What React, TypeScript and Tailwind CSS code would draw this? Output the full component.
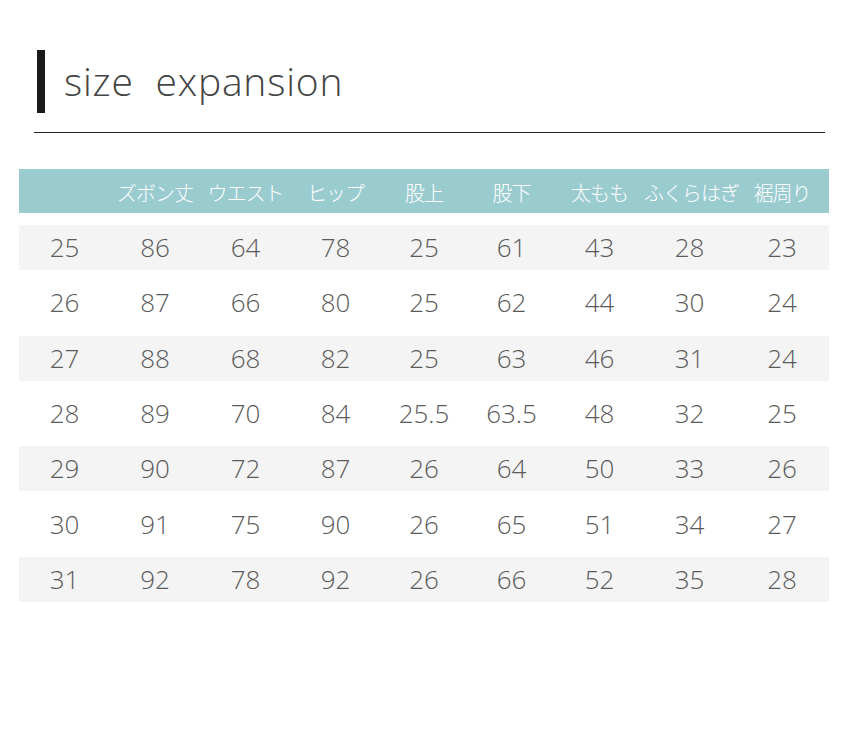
const headers = ["", "ズボン丈", "ウエスト", "ヒップ", "股上", "股下", "太もも", "ふくらはぎ", "裾周り"];

const rows = [
  ["25", "86", "64", "78", "25", "61", "43", "28", "23"],
  ["26", "87", "66", "80", "25", "62", "44", "30", "24"],
  ["27", "88", "68", "82", "25", "63", "46", "31", "24"],
  ["28", "89", "70", "84", "25.5", "63.5", "48", "32", "25"],
  ["29", "90", "72", "87", "26", "64", "50", "33", "26"],
  ["30", "91", "75", "90", "26", "65", "51", "34", "27"],
  ["31", "92", "78", "92", "26", "66", "52", "35", "28"],
];

const cols = "grid grid-cols-[91px_90px_91px_89px_88px_87px_89px_91px_94px]";

export default function App() {
  return (
    <div className="w-[850px] h-[750px] bg-white font-['Open_Sans','Noto_Sans_CJK_JP',sans-serif]">
      <div className="pt-[50px] pl-[37px] flex items-center">
        <div className="w-[8px] h-[63px] bg-[#1a1a1a]" />
        <h1 className="ml-[19px] text-[39px] font-light text-[#444] leading-none tracking-[0.8px] whitespace-pre -mt-[2px]">
          size  expansion
        </h1>
      </div>
      <div className="mt-[19px] ml-[34px] w-[791px] h-px bg-[#222]" />
      <div className="mt-[36px] ml-[19px] w-[810px]">
        <div className={`${cols} h-[44px] items-center bg-[#99cbcf] text-white text-[20px] leading-none font-light font-['Noto_Sans_CJK_JP',sans-serif] tracking-[-1px]`}>
          {headers.map((h, i) => (
            <div key={i} className="text-center whitespace-nowrap pt-[3px]">
              {h}
            </div>
          ))}
        </div>
        <div className="mt-[12px] flex flex-col gap-[10.33px]">
          {rows.map((r, i) => (
            <div
              key={i}
              className={`${cols} h-[45px] items-center text-[26px] font-light text-[#5a5a5a] ${i % 2 === 0 ? "bg-[#f4f4f4]" : "bg-white"}`}
            >
              {r.map((c, j) => (
                <div key={j} className="text-center">
                  {c}
                </div>
              ))}
            </div>
          ))}
        </div>
      </div>
    </div>
  );
}
